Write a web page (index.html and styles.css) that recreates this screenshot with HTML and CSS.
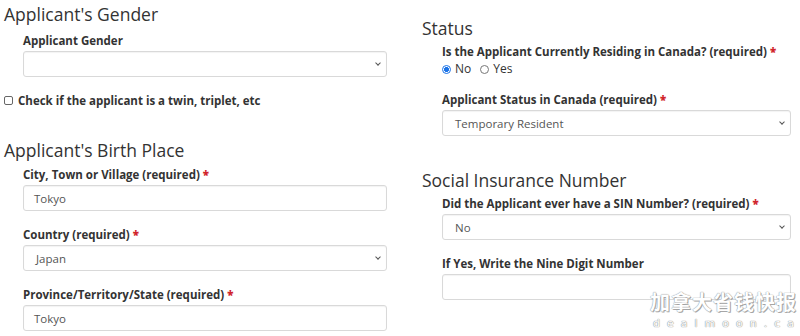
FILE: index.html
```html
<!DOCTYPE html>
<html lang="en">
<head>
    <meta charset="UTF-8">
    <title>Applicant</title>
    <link rel="stylesheet" href="styles.css">
</head>

<body>
    <div class="page">
        <!--왼쪽 컬럼-->
        <div class="col col-left">
            <h2 class="sec-tit sec-gender">Applicant's Gender</h2>
            <div class="fgroup">
                <label class="flabel">Applicant Gender</label>
                <div class="fselect"><span class="fval"></span><i class="chev"></i></div>
            </div>
            <label class="twin"><span class="cbox"></span>Check if the applicant is a twin, triplet, etc</label>

            <h2 class="sec-tit sec-birth">Applicant's Birth Place</h2>
            <div class="fgroup">
                <label class="flabel">City, Town or Village (required) <b class="req">*</b></label>
                <div class="finput"><span class="fval">Tokyo</span></div>
            </div>
            <div class="fgroup">
                <label class="flabel">Country (required) <b class="req">*</b></label>
                <div class="fselect"><span class="fval">Japan</span><i class="chev"></i></div>
            </div>
            <div class="fgroup">
                <label class="flabel">Province/Territory/State (required) <b class="req">*</b></label>
                <div class="finput"><span class="fval">Tokyo</span></div>
            </div>
        </div>

        <!--오른쪽 컬럼-->
        <div class="col col-right">
            <h2 class="sec-tit sec-status">Status</h2>
            <div class="fgroup fgroup-radio">
                <label class="flabel">Is the Applicant Currently Residing in Canada? (required) <b class="req">*</b></label>
                <div class="radios">
                    <span class="radio on"></span><span class="rtxt">No</span>
                    <span class="radio"></span><span class="rtxt">Yes</span>
                </div>
            </div>
            <div class="fgroup">
                <label class="flabel">Applicant Status in Canada (required) <b class="req">*</b></label>
                <div class="fselect"><span class="fval">Temporary Resident</span><i class="chev"></i></div>
            </div>

            <h2 class="sec-tit sec-sin">Social Insurance Number</h2>
            <div class="fgroup">
                <label class="flabel">Did the Applicant ever have a SIN Number? (required) <b class="req">*</b></label>
                <div class="fselect"><span class="fval">No</span><i class="chev"></i></div>
            </div>
            <div class="fgroup">
                <label class="flabel">If Yes, Write the Nine Digit Number</label>
                <div class="finput"><span class="fval"></span></div>
            </div>
        </div>
    </div>

    <!--워터마크-->
    <div class="wmark">
        <div class="wm-cn">加拿大省钱快报</div>
        <div class="wm-en">dealmoon.ca</div>
    </div>
</body>
</html>
```

FILE: styles.css
```css
html,
body {
    margin: 0;
    padding: 0;
}

body {
    background: #fff;
    font-family: 'Open Sans', 'Noto Sans', sans-serif;
    color: #333;
    overflow: hidden;
}

.page {
    display: flex;
    width: 800px;
    height: 336px;
}

/*컬럼*/
.col-left {
    width: 383px;
    padding-left: 4px;
    margin-right: 35px;
}

.col-right {
    width: 369px;
}

/*섹션 제목*/
.sec-tit {
    margin: 0 0 4px;
    font-size: 17.5px;
    font-weight: 400;
    line-height: 28px;
    color: #333;
}

.sec-gender {
    margin-bottom: 5px;
}

.sec-birth {
    margin-top: 28px;
    margin-bottom: 3px;
}

.sec-status {
    margin-top: 14px;
    margin-bottom: 2px;
}

.sec-sin {
    margin-top: 30px;
    margin-bottom: 2px;
}

/*폼그룹*/
.fgroup {
    padding-left: 19px;
    margin-bottom: 16px;
}

.col-right .fgroup {
    padding-left: 20px;
}

.flabel {
    display: block;
    font-size: 11.5px;
    font-weight: 700;
    line-height: 16px;
    margin-bottom: 2px;
}

.req {
    color: #d0242b;
}

/*입력박스*/
.fselect,
.finput {
    position: relative;
    height: 24px;
    border: 1px solid #d9d9d9;
    border-radius: 3px;
    box-shadow: inset 0 1px 1px rgba(0, 0, 0, .05);
    display: flex;
    align-items: center;
    padding-left: 10px;
}

.fselect {
    padding-left: 12px;
}

.fval {
    font-size: 11.5px;
    color: #555;
}

/*셀렉트 화살표*/
.chev {
    position: absolute;
    right: 6px;
    top: 9px;
    width: 3px;
    height: 3px;
    border-right: 1px solid #555;
    border-bottom: 1px solid #555;
    transform: rotate(45deg);
}

/*체크박스*/
.twin {
    display: flex;
    align-items: center;
    font-size: 11.5px;
    font-weight: 700;
}

.cbox {
    width: 7px;
    height: 7px;
    border: 1px solid #666;
    border-radius: 2px;
    margin-right: 5px;
}

/*라디오*/
.fgroup-radio {
    margin-bottom: 0;
}

.radios {
    display: flex;
    align-items: center;
    margin-top: -2px;
    margin-bottom: 14px;
    font-size: 12px;
    line-height: 18px;
}

.radio {
    width: 7px;
    height: 7px;
    border: 1px solid #777;
    border-radius: 50%;
    margin-right: 4px;
}

.radio.on {
    border-color: #1a73e8;
    background: radial-gradient(circle, #1a73e8 0 2.2px, #fff 2.8px);
}

.rtxt {
    margin-right: 9px;
}

/*워터마크*/
.wmark {
    position: absolute;
    right: 3px;
    bottom: 5px;
    text-align: center;
    color: #fff;
}

.wm-cn {
    font-family: 'Noto Sans CJK SC', sans-serif;
    font-size: 20px;
    font-weight: 700;
    letter-spacing: 1px;
    line-height: 22px;
    text-shadow: 0 0 1px #999, 0 0 1px #999, 1px 1px 0 #aaa;
}

.wm-en {
    font-family: 'DejaVu Sans', sans-serif;
    font-size: 11px;
    letter-spacing: 7px;
    line-height: 14px;
    margin-top: 4px;
    margin-right: -7px;
    text-shadow: 0 0 1px #888, 0 0 1px #888;
}
```
